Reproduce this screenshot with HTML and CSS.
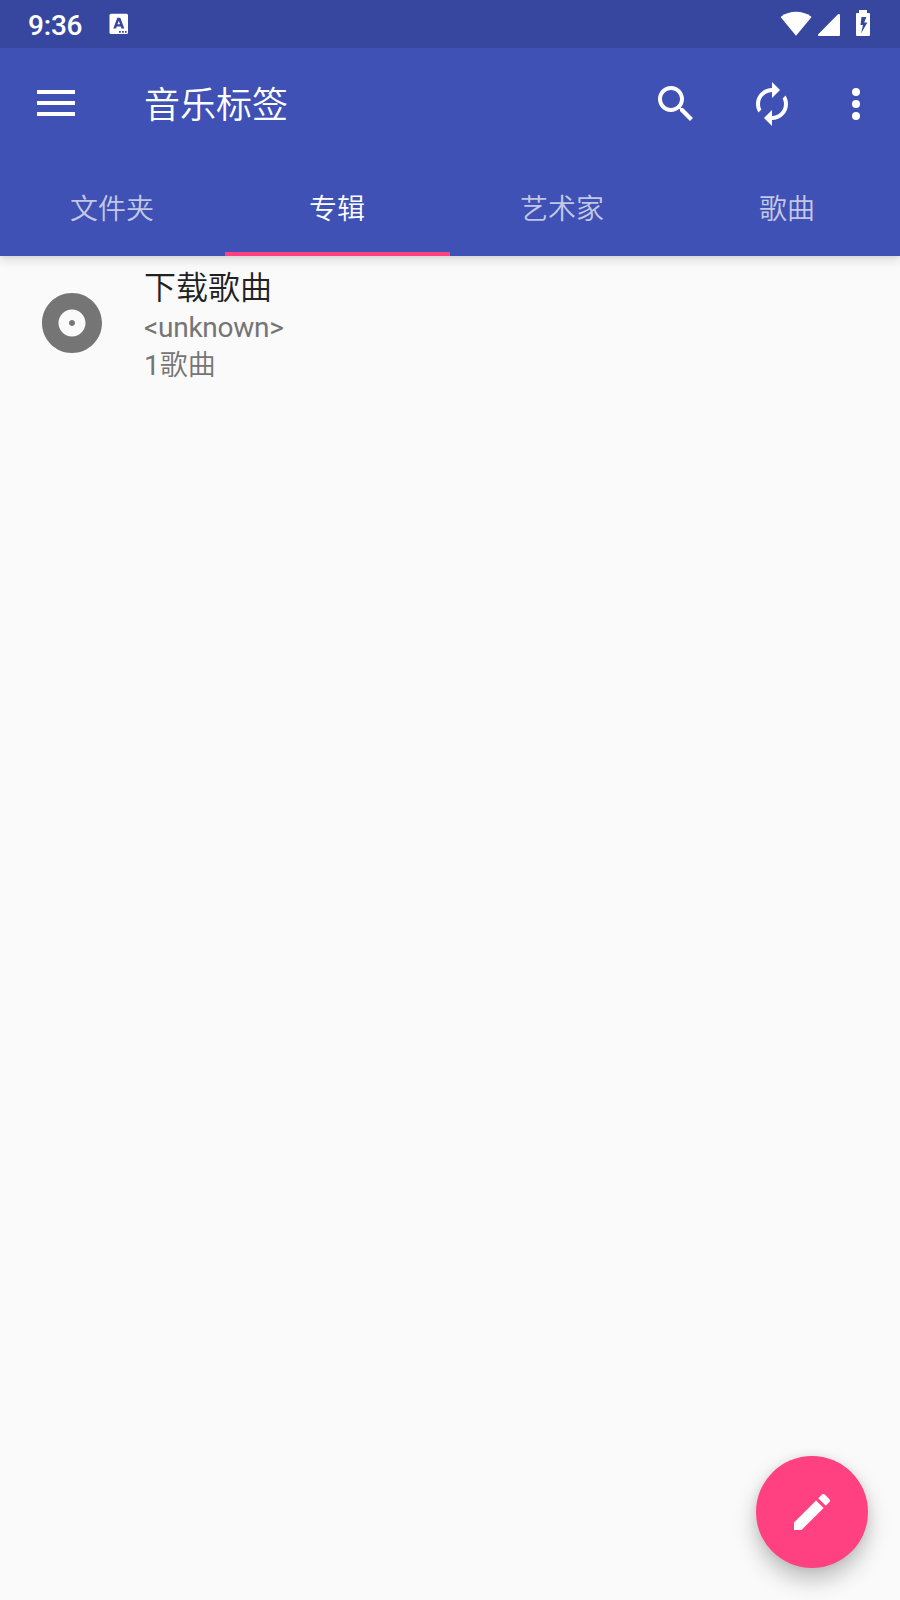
FILE: index.html
```html
<!DOCTYPE html>
<html lang="zh-CN">
<head>
<meta charset="utf-8">
<title>音乐标签</title>
<link rel="stylesheet" href="styles.css">
</head>
<body>
<div class="screen">
  <header class="header">
    <div class="status">
      <span class="clock">9:36</span>
      <svg class="ime" width="20" height="22" viewBox="0 0 20 22"><rect x=".5" y=".7" width="18.500" height="20.300" rx="1.500" fill="#fff"/><path fill="#37479f" fill-rule="evenodd" d="M8.300 4.800h3l4 10.700h-2.900l-.6-2H7.700l-.6 2H4.300zm1.500 3.200L8.500 11.300h2.600zM10 18h1.800v1.700H10zM13 18h1.800v1.700H13zM16 18h1.600v1.700H16z"/></svg>
      <div class="system">
        <svg width="32" height="26" viewBox="0 0 32 26"><path fill="#fff" d="M16 25.800 1 7.600C.7 7.200.8 6.700 1.200 6.400 5.500 3.200 10.500 1.700 16 1.700s10.500 1.500 15 4.700c.4.300.5.800.2 1.200z"/></svg>
        <svg class="signal" width="22" height="26" viewBox="0 0 22 26"><path fill="#fff" d="M22 5v20a1 1 0 0 1-1 1H1q-1.800-.5-.5-2L20 4.300q1.500-1 2 .7z"/></svg>
        <svg class="battery" width="14" height="26" viewBox="0 0 14 26"><path fill="#fff" fill-rule="evenodd" d="M3 0h8v3h2a1 1 0 0 1 1 1v21a1 1 0 0 1-1 1H1a1 1 0 0 1-1-1V4a1 1 0 0 1 1-1h2zm2.500 7L4.500 15H7L5 23.500 11.400 12.500H8.200L10.400 7z"/></svg>
      </div>
    </div>
    <div class="toolbar">
      <svg class="menu" width="38" height="26" viewBox="0 0 38 26"><path fill="#fff" d="M0 0h38v4H0zM0 11h38v4H0zM0 22h38v4H0z"/></svg>
      <h1 class="title">音乐标签</h1>
      <svg class="icon search" viewBox="0 0 24 24"><path d="M15.500 14h-.79l-.28-.27C15.410 12.590 16 11.110 16 9.500 16 5.910 13.090 3 9.500 3S3 5.910 3 9.500 5.910 16 9.500 16c1.610 0 3.090-.59 4.230-1.570l.27.28v.79l5 4.990L20.490 19l-4.990-5zm-6 0C7.010 14 5 11.990 5 9.500S7.010 5 9.500 5 14 7.010 14 9.500 11.990 14 9.500 14z"/></svg>
      <svg class="icon refresh" viewBox="0 0 24 24"><path d="M12 6v3l4-4-4-4v3c-4.420 0-8 3.580-8 8 0 1.570.46 3.030 1.240 4.260L6.700 14.800c-.45-.83-.7-1.790-.7-2.800 0-3.310 2.690-6 6-6zm6.760 1.740L17.300 9.200c.44.84.7 1.790.7 2.800 0 3.310-2.690 6-6 6v-3l-4 4 4 4v-3c4.420 0 8-3.580 8-8 0-1.570-.46-3.030-1.240-4.260z"/></svg>
      <svg class="icon more" viewBox="0 0 24 24"><circle cx="12" cy="6" r="2"/><circle cx="12" cy="12" r="2"/><circle cx="12" cy="18" r="2"/></svg>
    </div>
    <nav class="tabs">
      <span class="tab">文件夹</span>
      <span class="tab tab-active">专辑</span>
      <span class="tab">艺术家</span>
      <span class="tab">歌曲</span>
    </nav>
  </header>
  <main class="list">
    <div class="album">
      <svg class="disc" viewBox="0 0 24 24"><path d="M12 2C6.480 2 2 6.480 2 12s4.480 10 10 10 10-4.480 10-10S17.520 2 12 2zm0 14.500c-2.490 0-4.500-2.010-4.500-4.500S9.510 7.500 12 7.500s4.500 2.010 4.500 4.500-2.010 4.500-4.500 4.500zm0-5.500c-.55 0-1 .45-1 1s.45 1 1 1 1-.45 1-1-.45-1-1-1z"/></svg>
      <div class="info">
        <div class="name">下载歌曲</div>
        <div class="artist">&lt;unknown&gt;</div>
        <div class="count"><span class="number">1</span>歌曲</div>
      </div>
    </div>
  </main>
  <div class="fab"><svg class="icon" viewBox="0 0 24 24"><path d="M3 17.250V21h3.750L17.810 9.940l-3.750-3.750L3 17.250zM20.710 7.040c.39-.39.39-1.020 0-1.410l-2.340-2.340c-.39-.39-1.020-.39-1.410 0l-1.830 1.830 3.750 3.750 1.830-1.830z"/></svg></div>
</div>
</body>
</html>
```
FILE: styles.css
```css
* { box-sizing: border-box; }
body {
  margin: 0;
  font-family: Roboto, "Noto Sans CJK SC", sans-serif;
  font-weight: 350;
  background: #fafafa;
}
svg { display: block; flex: none; }
.screen {
  position: relative;
  width: 900px;
  height: 1600px;
  overflow: hidden;
  background: #fafafa;
}
.header {
  height: 256px;
  background: #3f51b5;
  box-shadow: 0 4px 10px rgba(0, 0, 0, .13), 0 0 4px rgba(0, 0, 0, .1);
}
.status {
  display: flex;
  height: 48px;
  padding-left: 28px;
  padding-right: 30px;
  background: #37479f;
  color: #fff;
}
.clock {
  width: 81px;
  font-size: 28px;
  font-weight: 500;
  line-height: 52px;
  letter-spacing: -.2px;
}
.ime { margin-top: 13px; }
.system {
  display: flex;
  margin-left: auto;
  padding-top: 10px;
}
.signal { margin-left: 6px; }
.battery { margin-left: 16px; }
.toolbar {
  display: flex;
  align-items: center;
  height: 112px;
  padding-left: 37px;
}
.menu { margin-top: -2px; }
.title {
  flex: 1;
  margin: 0;
  padding-top: 4px;
  padding-left: 69px;
  font-size: 36px;
  font-weight: 350;
  line-height: 48px;
  color: #fff;
}
.icon {
  width: 48px;
  height: 48px;
  fill: #fff;
}
.refresh { margin-left: 48px; }
.more { margin: 0 20px 0 36px; }
.tabs {
  display: grid;
  grid-template-columns: repeat(4, 1fr);
  height: 96px;
}
.tab {
  height: 96px;
  padding-top: 4px;
  padding-right: 1px;
  border-bottom: 4px solid transparent;
  font-size: 28px;
  line-height: 92px;
  text-align: center;
  color: rgba(255, 255, 255, .7);
}
.tab-active {
  border-color: #ff4081;
  color: #fff;
}
.album {
  display: flex;
  padding-left: 36px;
}
.disc {
  width: 72px;
  height: 72px;
  margin-top: 31px;
  fill: #757575;
}
.info {
  padding: 8px 0 0 36px;
  color: #757575;
}
.name {
  font-size: 32px;
  line-height: 48px;
  color: #212121;
}
.artist {
  font-size: 28px;
  font-weight: 400;
  line-height: 32px;
  letter-spacing: -.25px;
}
.count {
  font-size: 28px;
  line-height: 43px;
}
.number { font-weight: 400; }
.fab {
  position: absolute;
  right: 32px;
  bottom: 32px;
  display: grid;
  place-items: center;
  width: 112px;
  height: 112px;
  border-radius: 50%;
  background: #ff4081;
  box-shadow: 0 12px 22px rgba(0, 0, 0, .24), 0 0 10px rgba(0, 0, 0, .08);
}
```
